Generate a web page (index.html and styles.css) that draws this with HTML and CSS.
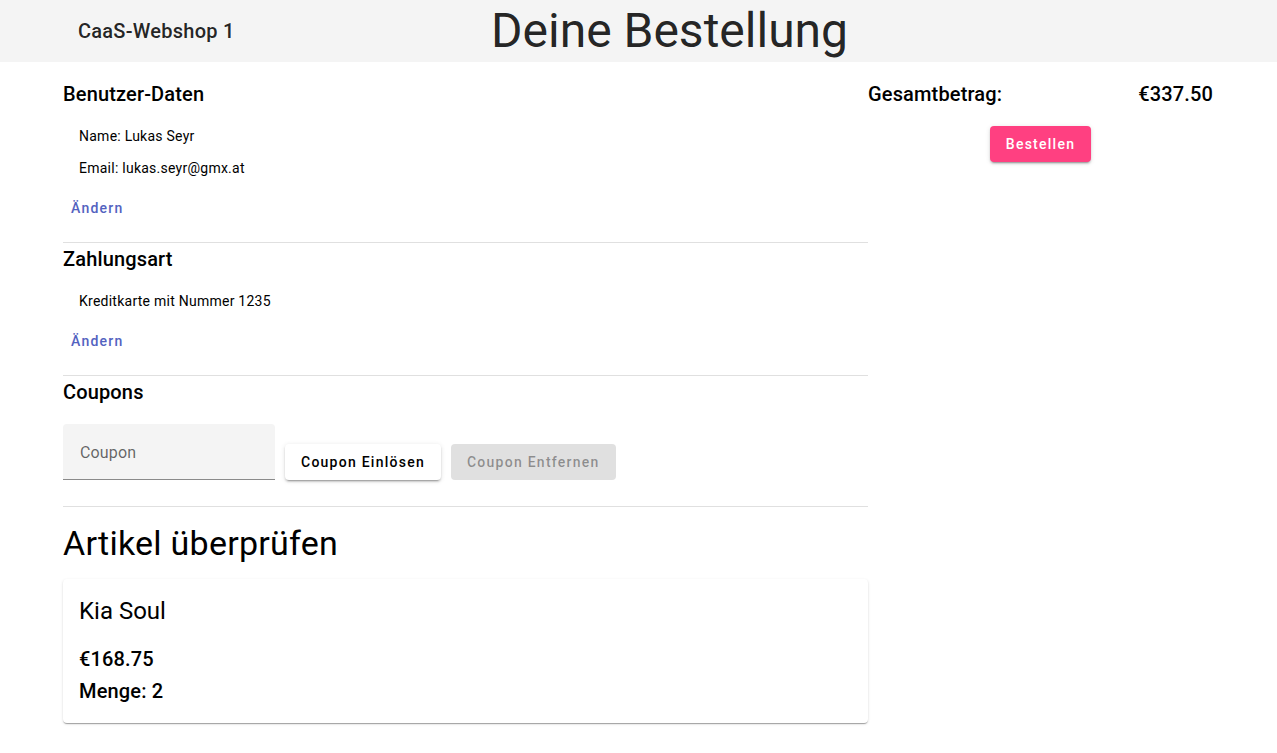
FILE: index.html
```html
<!DOCTYPE html>
<html lang="de">
<head>
<meta charset="utf-8">
<title>Deine Bestellung</title>
<link rel="stylesheet" href="styles.css">
</head>
<body>
<header class="toolbar">
  <span class="brand">CaaS-Webshop 1</span>
  <h1 class="page-title">Deine Bestellung</h1>
</header>
<main class="container">
  <section class="left">
    <div class="block">
      <h2 class="block-title">Benutzer-Daten</h2>
      <p class="line">Name: Lukas Seyr</p>
      <p class="line">Email: lukas.seyr@gmx.at</p>
      <button class="text-btn">Ändern</button>
    </div>
    <hr class="divider">
    <div class="block">
      <h2 class="block-title">Zahlungsart</h2>
      <p class="line">Kreditkarte mit Nummer 1235</p>
      <button class="text-btn">Ändern</button>
    </div>
    <hr class="divider">
    <div class="block">
      <h2 class="block-title">Coupons</h2>
      <div class="coupon-row">
        <div class="field"><span class="placeholder">Coupon</span></div>
        <button class="raised-btn">Coupon Einlösen</button>
        <button class="raised-btn disabled" disabled>Coupon Entfernen</button>
      </div>
    </div>
    <hr class="divider">
    <h2 class="review-title">Artikel überprüfen</h2>
    <div class="card">
      <div class="card-title">Kia Soul</div>
      <div class="card-price">€168.75</div>
      <div class="card-qty">Menge: 2</div>
    </div>
  </section>
  <aside class="right">
    <div class="total-row">
      <span>Gesamtbetrag:</span>
      <span>€337.50</span>
    </div>
    <div class="order-wrap">
      <button class="order-btn">Bestellen</button>
    </div>
  </aside>
</main>
</body>
</html>
```

FILE: styles.css
```css
* { box-sizing: border-box; }
html, body {
  margin: 0;
  padding: 0;
  background: #fff;
  font-family: Roboto, "Noto Sans", sans-serif;
  color: rgba(0, 0, 0, 0.87);
}

.toolbar {
  height: 62px;
  background: #f4f4f4;
  display: flex;
  align-items: center;
  padding-left: 78px;
}
.brand {
  font-size: 20px;
  font-weight: 500;
  letter-spacing: 0.25px;
  width: 413px;
  color: rgba(0, 0, 0, 0.87);
}
.page-title {
  margin: 0;
  font-size: 48px;
  font-weight: 400;
  line-height: 62px;
  color: rgba(0, 0, 0, 0.87);
}

.container {
  width: 1150px;
  margin: 0 0 0 63px;
  display: flex;
}
.left {
  width: 805px;
  padding-top: 16px;
}
.right {
  width: 345px;
  padding-top: 16px;
}

.block-title {
  margin: 0;
  font-size: 20px;
  font-weight: 500;
  letter-spacing: 0.15px;
  line-height: 32px;
  color: #000;
}
.line {
  margin: 15px 0 0 16px;
  font-size: 14px;
  letter-spacing: 0.25px;
  line-height: 22px;
  color: #000;
}
.line + .line { margin-top: 10px; }

.text-btn {
  display: block;
  margin: 11px 0 16px 0;
  height: 36px;
  padding: 0 8px;
  border: 0;
  background: transparent;
  font-family: Roboto, sans-serif;
  font-size: 14px;
  font-weight: 500;
  letter-spacing: 1.25px;
  color: #5362c0;
  border-radius: 4px;
}

.divider {
  margin: 0;
  border: 0;
  border-top: 1px solid #e0e0e0;
}

.coupon-row {
  display: flex;
  align-items: flex-end;
  gap: 10px;
  margin-top: 16px;
  margin-bottom: 26px;
}
.field {
  width: 212px;
  height: 56px;
  background: #f4f4f4;
  border-radius: 4px 4px 0 0;
  border-bottom: 1px solid #8a8a8a;
  padding: 18px 16px 0 17px;
}
.placeholder {
  font-size: 16px;
  letter-spacing: 0.15px;
  color: rgba(0, 0, 0, 0.6);
  line-height: 22px;
}
.raised-btn {
  height: 36px;
  padding: 0 16px;
  border: 0;
  border-radius: 4px;
  background: #fff;
  font-family: Roboto, sans-serif;
  font-size: 14px;
  font-weight: 500;
  letter-spacing: 1.25px;
  color: #000;
  box-shadow: 0 3px 1px -2px rgba(0,0,0,.2), 0 2px 2px 0 rgba(0,0,0,.14), 0 1px 5px 0 rgba(0,0,0,.12);
}
.raised-btn.disabled {
  background: #e0e0e0;
  color: rgba(0, 0, 0, 0.38);
  box-shadow: none;
}

.review-title {
  margin: 16px 0 16px 0;
  font-size: 34px;
  font-weight: 400;
  letter-spacing: 0.25px;
  line-height: 40px;
  color: #000;
}

.card {
  background: #fff;
  border-radius: 4px;
  padding: 16px;
  box-shadow: 0 2px 1px -1px rgba(0,0,0,.2), 0 1px 1px 0 rgba(0,0,0,.14), 0 1px 3px 0 rgba(0,0,0,.12);
  margin-bottom: 24px;
}
.card-title {
  font-size: 24px;
  font-weight: 400;
  line-height: 32px;
  color: #000;
}
.card-price {
  margin-top: 16px;
  font-size: 20px;
  font-weight: 500;
  letter-spacing: 0.15px;
  line-height: 32px;
  color: #000;
}
.card-qty {
  font-size: 20px;
  font-weight: 500;
  letter-spacing: 0.15px;
  line-height: 32px;
  color: #000;
}

.total-row {
  display: flex;
  justify-content: space-between;
  font-size: 20px;
  font-weight: 500;
  letter-spacing: 0.15px;
  line-height: 32px;
  color: #000;
}
.order-wrap {
  display: flex;
  justify-content: center;
  margin-top: 16px;
}
.order-btn {
  height: 36px;
  padding: 0 16px;
  border: 0;
  border-radius: 4px;
  background: #ff4081;
  color: #fff;
  font-family: Roboto, sans-serif;
  font-size: 14px;
  font-weight: 500;
  letter-spacing: 1.25px;
  box-shadow: 0 3px 1px -2px rgba(0,0,0,.2), 0 2px 2px 0 rgba(0,0,0,.14), 0 1px 5px 0 rgba(0,0,0,.12);
}
```
